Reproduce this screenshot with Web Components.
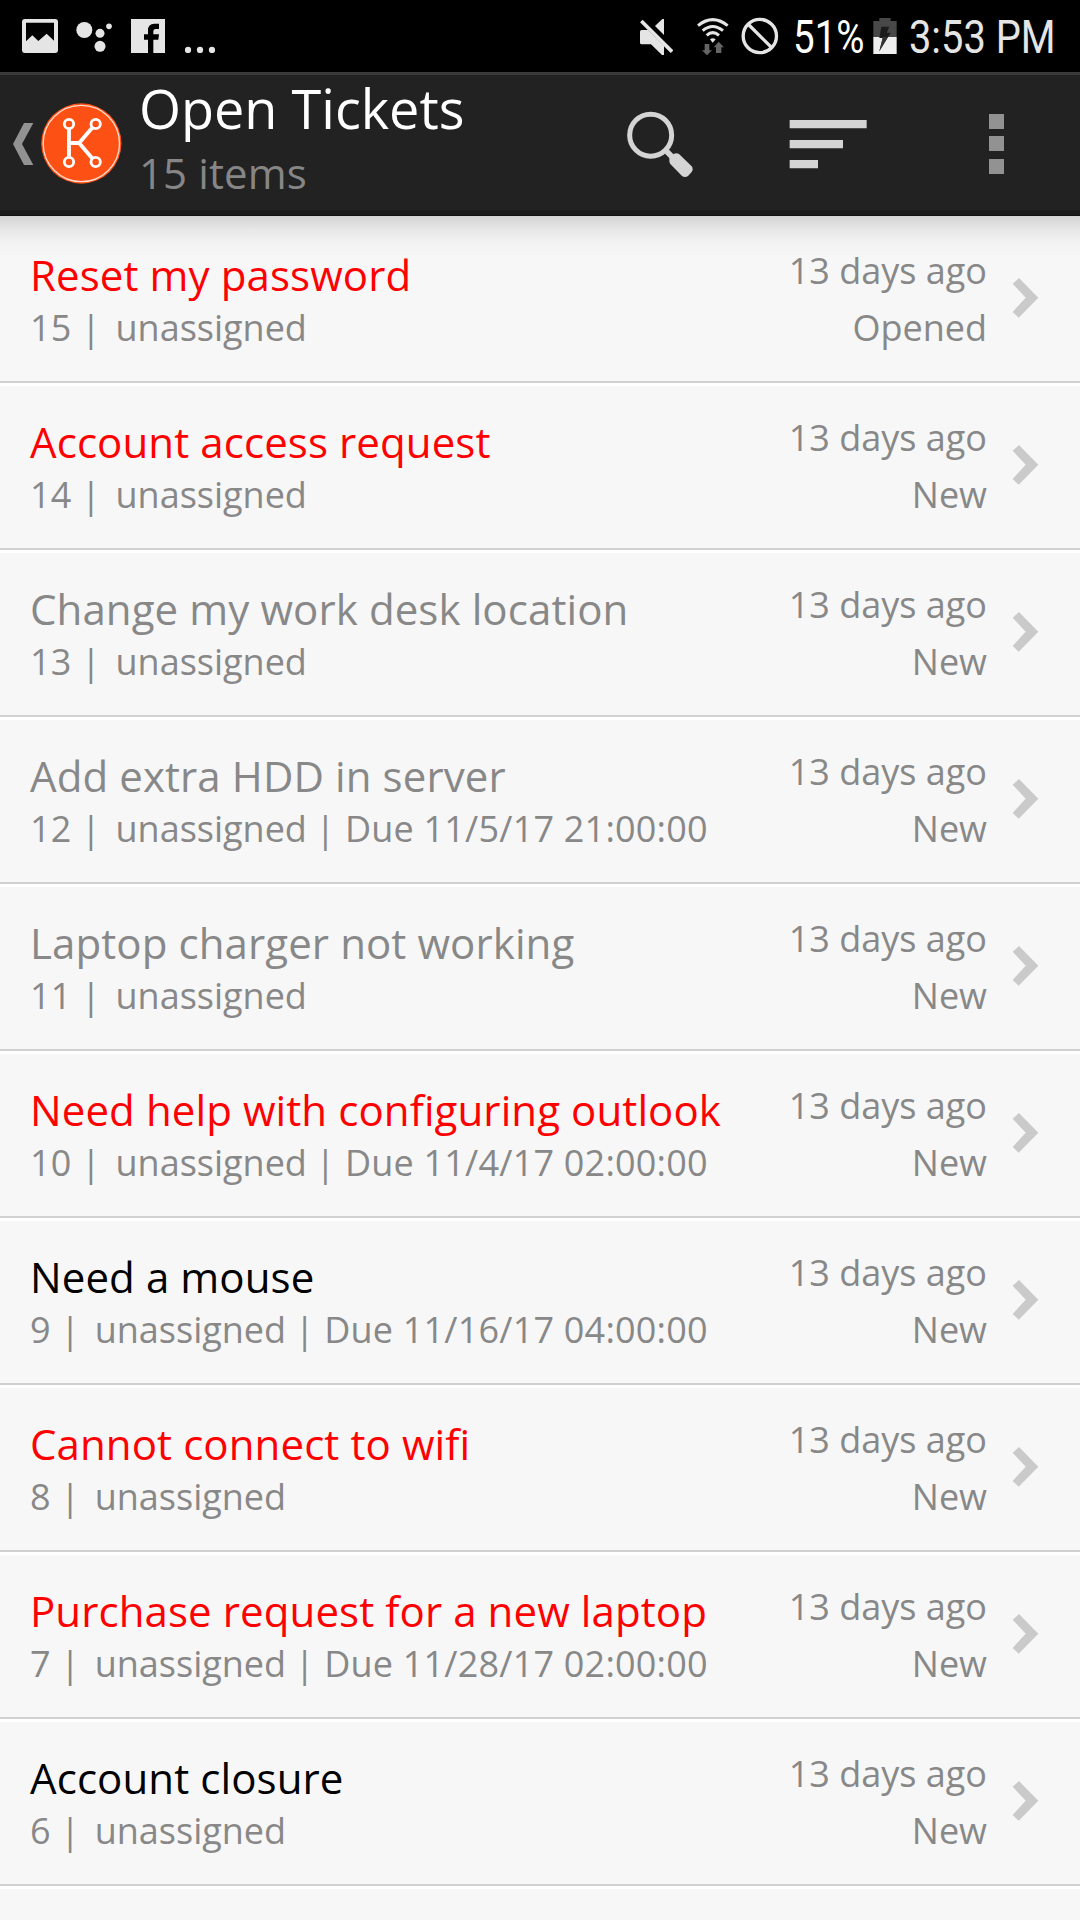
<!DOCTYPE html>
<html lang="en">
<head>
<meta charset="utf-8">
<title>Open Tickets</title>
<style>
  body {
    margin: 0;
    width: 1080px;
    height: 1920px;
    overflow: hidden;
    background: #f7f7f7;
    font-family: "Open Sans", "Noto Sans", sans-serif;
  }
</style>
</head>
<body>
<ticket-app></ticket-app>

<script>
// icons are drawn on a grid of 3 units per pixel
const ICONS = {
  picture: ['66 57 108 102', `
    <path fill-rule="evenodd" d="M75 57H165Q174 57 174 66V150Q174 159 165 159H75Q66 159 66 150V66Q66 57 75 57ZM78 68V124L97 106L115 123L140 101L162 122V68Z"/>`],
  bubbles: ['228 57 108 102', `
    <circle cx="253" cy="90" r="24"/><circle cx="300" cy="100" r="13.5"/>
    <circle cx="327" cy="79" r="8.5"/><circle cx="300" cy="139" r="16.5"/>`],
  facebook: ['393 57 102 102', `
    <path d="M393 57H495V159H460V119H475L477 103H460V94Q460 87 467 87H477V71H463Q444 71 444 91V103H432V119H444V159H393Z"/>`],
  more: ['555 57 90 102', `
    <circle cx="564" cy="150" r="9.5"/><circle cx="600" cy="150" r="9.5"/><circle cx="636" cy="150" r="9.5"/>`],
  mute: ['60 51 99 111', `
    <path d="M60 92Q60 87 65 87H84L132 134V162H126L93 130H65Q60 130 60 125Z"/>
    <path d="M105 75L127 54H132V102Z"/>
    <path d="M64 60L156 152" stroke="#e5e5e5" stroke-width="11"/>`],
  wifi: ['230 51 96 111', `
    <g fill="none" stroke="#e5e5e5" stroke-width="9">
      <path d="M233 74Q277 38 322 74"/><path d="M247 89Q277 64 308 89"/><path d="M259 103Q277 87 296 103"/>
    </g>
    <path d="M269 115Q277 108 286 115L277 125Z"/>
    <g fill="#656565"><path d="M253 129H267V148H275L260 163L245 148H253Z"/><path d="M287 156H303V139H311L295 122L280 139H287Z"/></g>`],
  block: ['362 51 114 114', `
    <g fill="none" stroke="#e5e5e5" stroke-width="10"><circle cx="418.5" cy="108" r="50"/><path d="M383 72L454 143"/></g>`],
  battery: ['758 54 72 108', `
    <path fill="#484848" d="M759 63H777V54H811V63H829V111H759Z"/>
    <path fill="#eee" d="M759 111H829V162H759Z"/>
    <path fill="#1c1c1c" d="M783 80H807L799 98H811L777 154L787 114H777Z"/>
    <path fill="#333" d="M787 111H803L777 154L787 114Z"/>`],
  back: ['39 159 63 126', `
    <path fill="#929292" d="M39 222L72 159H100L66 222L100 285H72Z"/>`],
  logo: ['124 99 243 243', `
    <circle cx="245" cy="220.500" r="120.500" fill="#fd5014"/>
    <circle cx="245" cy="220.500" r="114.500" fill="none" stroke="#ffdccd" stroke-width="4"/>
    <g fill="none" stroke="#fff" stroke-width="8.500">
      <circle cx="208" cy="162" r="14"/><circle cx="288" cy="162" r="14"/>
      <circle cx="208" cy="276" r="14"/><circle cx="288" cy="276" r="14"/>
    </g>
    <path fill="none" stroke="#fff" stroke-width="11.500" d="M208 176V262M208 219H241M279 172L241 216V222L279 266"/>`],
  search: ['81 122 201 201', `
    <circle cx="152" cy="194.500" r="63" fill="none" stroke="#d4d4d4" stroke-width="15"/>
    <path d="M195 238L222 265" stroke="#d4d4d4" stroke-width="17"/>
    <path fill="#d4d4d4" d="M208 264L221 251Q229 247 237 251L275 288Q281 297 275 305L264 317Q255 323 246 317L211 281Q207 275 208 264Z"/>`],
  sort: ['567 147 234 150', `
    <path fill="#d4d4d4" d="M569 150H800V175H569ZM569 210H729V235H569ZM569 270H654V295H569Z"/>`],
  overflow: ['1167 132 45 180', `
    <path fill="#929292" d="M1167 132H1212V177H1167ZM1167 198H1212V243H1167ZM1167 267H1212V312H1167Z"/>`],
  chevron: ['816 141 81 123', `
    <path fill="#cacaca" d="M818 161L837 144L895 203L836 263L818 246L857 203Z"/>`],
};

class AppIcon extends HTMLElement {
  connectedCallback() {
    const [box, shapes] = ICONS[this.getAttribute('name')];
    const [, , w, h] = box.split(' ');
    this.attachShadow({ mode: 'open' }).innerHTML = `
      <style>
        :host { display: block; flex: none; }
        svg { display: block; fill: #e5e5e5; }
      </style>
      <svg width="${w / 3}" height="${h / 3}" viewBox="${box}">${shapes}</svg>`;
  }
}
customElements.define('app-icon', AppIcon);

class StatusBar extends HTMLElement {
  constructor() {
    super();
    this.attachShadow({ mode: 'open' }).innerHTML = `
      <style>
        :host {
          display: flex;
          justify-content: space-between;
          height: 72px;
          box-sizing: border-box;
          padding: 0 25px 0 22px;
          background: #000;
        }
        div { display: flex; align-items: center; }
        .left { gap: 19px; }
        .bubbles { margin-left: -1px; }
        .more { margin-left: 1px; }
        .right { gap: 12px; }
        .wifi { margin-left: 11.700px; }
        svg { display: block; overflow: visible; font: 46px Roboto, sans-serif; fill: #e5e5e5; }
        .pct { fill: #fff; margin: 0 -3px 0 1.800px; }
        .time { margin-left: -.5px; }
      </style>
      <div class="left">
        <app-icon name="picture"></app-icon>
        <app-icon class="bubbles" name="bubbles"></app-icon>
        <app-icon name="facebook"></app-icon>
        <app-icon class="more" name="more"></app-icon>
      </div>
      <div class="right">
        <app-icon name="mute"></app-icon>
        <app-icon class="wifi" name="wifi"></app-icon>
        <app-icon name="block"></app-icon>
        <svg class="pct" width="71.500" height="72"><text y="53" textLength="71.500" lengthAdjust="spacingAndGlyphs">51%</text></svg>
        <app-icon name="battery"></app-icon>
        <svg class="time" width="146.500" height="72"><text y="53" textLength="146.500" lengthAdjust="spacingAndGlyphs">3:53 PM</text></svg>
      </div>`;
  }
}
customElements.define('status-bar', StatusBar);

class ActionBar extends HTMLElement {
  constructor() {
    super();
    this.attachShadow({ mode: 'open' }).innerHTML = `
      <style>
        :host {
          display: flex;
          align-items: center;
          position: relative;
          height: 144px;
          box-sizing: border-box;
          padding: 0 76px 0 13px;
          background: #222;
          box-shadow: inset 0 3px #3a3a3a, inset 0 -1px #141014, inset 0 -6px #1b1b1b;
        }
        /* shadow cast on the list */
        :host::after {
          content: '';
          position: absolute;
          top: 100%;
          left: 0;
          right: 0;
          height: 42px;
          background: linear-gradient(rgba(0,0,0,.15), rgba(0,0,0,.063) 14px, rgba(0,0,0,.025) 25px, transparent);
        }
        .logo { margin: 0 0 1px 7px; }
        .titles { flex: 1; align-self: flex-start; margin: 6px 0 0 17px; }
        .title { font-size: 54px; line-height: 60px; color: #fff; }
        .sub { font-size: 42px; line-height: 50px; margin-top: 10px; letter-spacing: .1px; color: #868686; }
        .actions { display: flex; align-items: center; }
        .sort { margin: 0 122px 0 95px; }
      </style>
      <app-icon name="back"></app-icon>
      <app-icon class="logo" name="logo"></app-icon>
      <div class="titles">
        <div class="title"><slot name="title"></slot></div>
        <div class="sub"><slot name="subtitle"></slot></div>
      </div>
      <div class="actions">
        <app-icon name="search"></app-icon>
        <app-icon class="sort" name="sort"></app-icon>
        <app-icon name="overflow"></app-icon>
      </div>`;
  }
}
customElements.define('action-bar', ActionBar);

const rowTemplate = document.createElement('template');
rowTemplate.innerHTML = `
  <style>
    :host {
      display: flex;
      height: 167px;
      box-sizing: border-box;
      padding: 0 41px 0 30px;
      border-bottom: 3px solid #fff;
      box-shadow: inset 0 -2px #d0d0d0;
      font-size: 36px;
      line-height: 50px;
      color: #888;
      white-space: nowrap;
    }
    .main { flex: 1; padding-top: 31px; }
    .title { font-size: 42px; letter-spacing: .1px; color: #888; }
    :host([state="late"]) .title { color: #f00; }
    :host([state="open"]) .title { color: #000; }
    .info { margin-top: 3px; }
    .number { margin-right: 5px; letter-spacing: .2px; }
    .due { margin-left: -1px; letter-spacing: .2px; }
    .side { padding-top: 27px; text-align: right; }
    .status { margin-top: 7px; }
    app-icon { margin: 58px 0 0 25px; }
  </style>
  <div class="main">
    <div class="title"><slot></slot></div>
    <div class="info"><span class="number"></span> <span>unassigned</span><span class="due"></span></div>
  </div>
  <div class="side">
    <div class="age">13 days ago</div>
    <div class="status"></div>
  </div>
  <app-icon name="chevron"></app-icon>
`;

class TicketRow extends HTMLElement {
  constructor() {
    super();
    this.attachShadow({ mode: 'open' });
    this.shadowRoot.appendChild(rowTemplate.content.cloneNode(true));
  }

  connectedCallback() {
    const $ = (s) => this.shadowRoot.querySelector(s);
    const due = this.getAttribute('due');
    $('.number').textContent = `${this.getAttribute('number')} |`;
    $('.due').textContent = due ? ` | Due ${due}` : '';
    $('.status').textContent = this.getAttribute('status') || 'New';
  }
}
customElements.define('ticket-row', TicketRow);

class TicketApp extends HTMLElement {
  constructor() {
    super();
    this.attachShadow({ mode: 'open' }).innerHTML = `
      <style>
        :host { display: block; }
        .list { padding-top: 3px; }
      </style>
      <status-bar></status-bar>
      <action-bar>
        <span slot="title">Open Tickets</span>
        <span slot="subtitle">15 items</span>
      </action-bar>
      <div class="list">
        <ticket-row number="15" state="late" status="Opened">Reset my password</ticket-row>
        <ticket-row number="14" state="late">Account access request</ticket-row>
        <ticket-row number="13">Change my work desk location</ticket-row>
        <ticket-row number="12" due="11/5/17 21:00:00">Add extra HDD in server</ticket-row>
        <ticket-row number="11">Laptop charger not working</ticket-row>
        <ticket-row number="10" state="late" due="11/4/17 02:00:00">Need help with configuring outlook</ticket-row>
        <ticket-row number="9" state="open" due="11/16/17 04:00:00">Need a mouse</ticket-row>
        <ticket-row number="8" state="late">Cannot connect to wifi</ticket-row>
        <ticket-row number="7" state="late" due="11/28/17 02:00:00">Purchase request for a new laptop</ticket-row>
        <ticket-row number="6" state="open">Account closure</ticket-row>
      </div>`;
  }
}
customElements.define('ticket-app', TicketApp);
</script>
</body>
</html>
